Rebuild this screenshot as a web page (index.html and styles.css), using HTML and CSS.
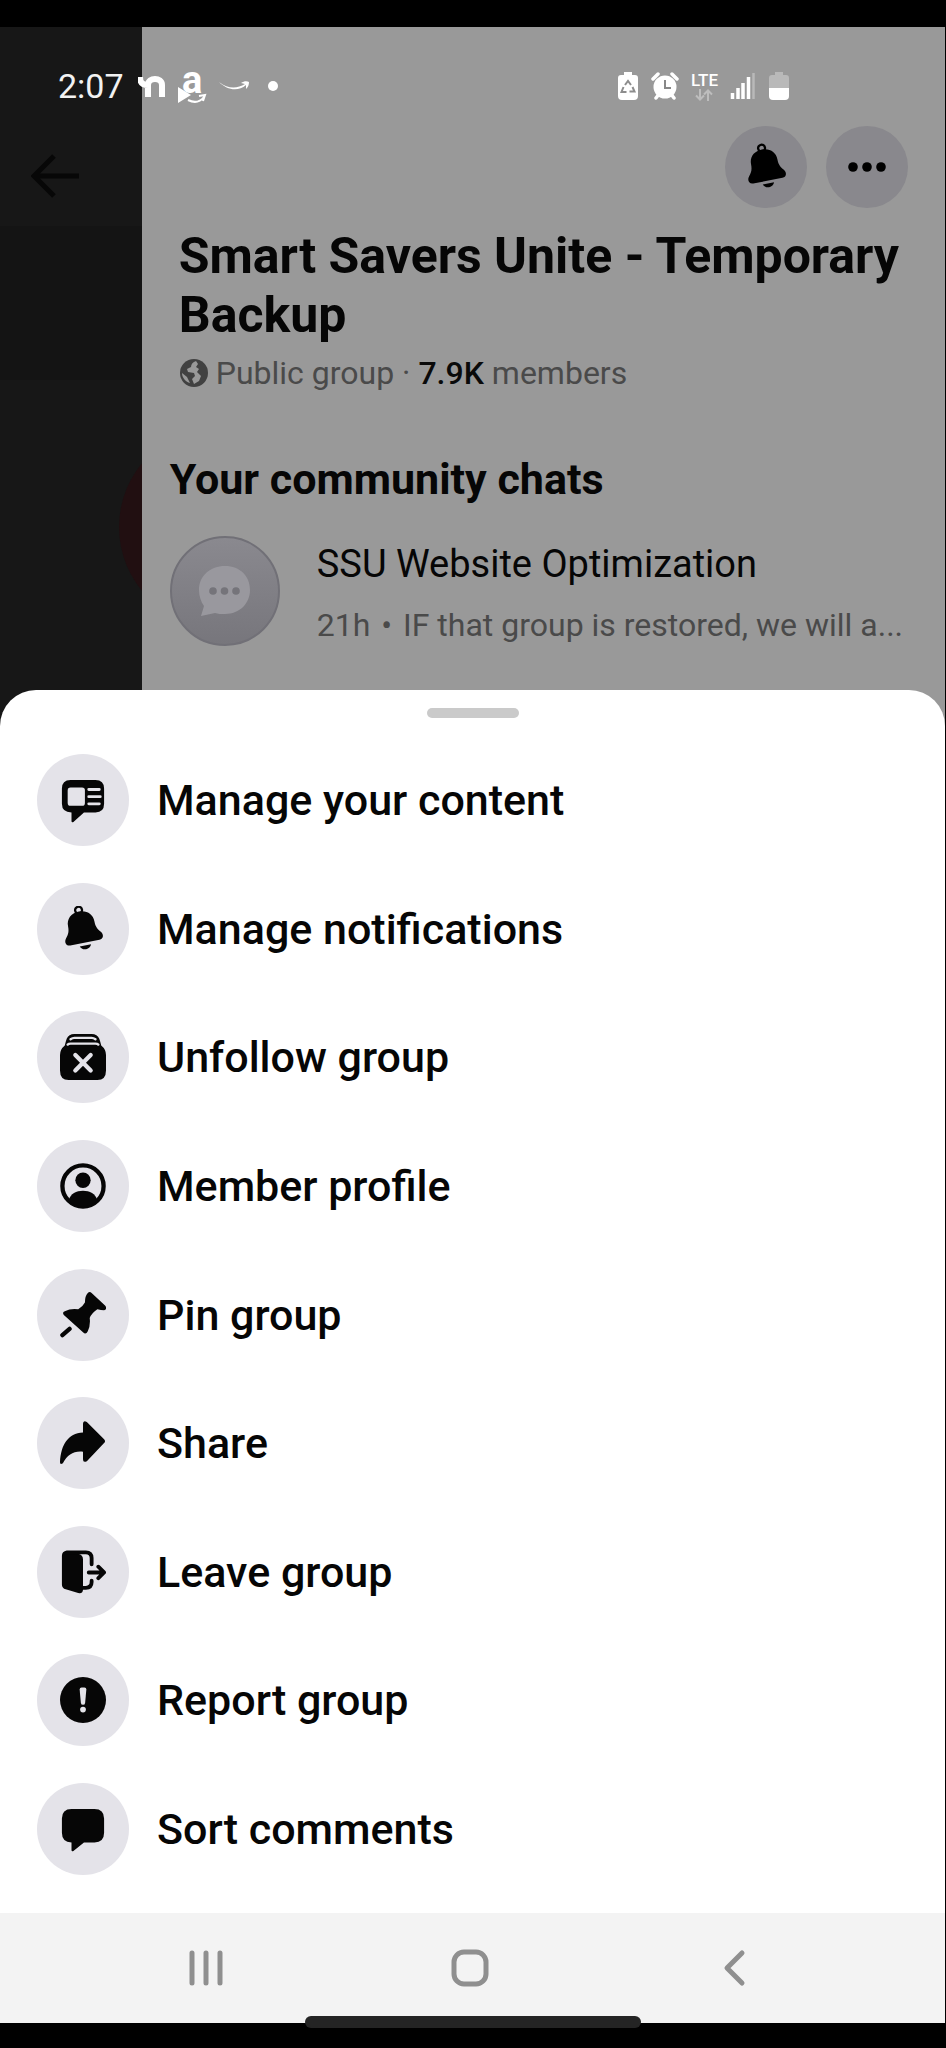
FILE: index.html
```
<!DOCTYPE html>
<html lang="en">
<head>
    <meta charset="UTF-8">
    <meta name="viewport" content="width=device-width, initial-scale=1.0">
    <title>Smart Savers Unite - Temporary Backup</title>
    <link rel="stylesheet" href="styles.css">
</head>
<body>
    <svg class="sprite" aria-hidden="true">
        <symbol id="bell" viewBox="0 0 48 48">
            <g transform="translate(-1 -1) rotate(-11 24 24)">
                <circle cx="24" cy="5" r="3.600" fill="none" stroke="currentColor" stroke-width="2.400"/>
                <path d="M24 6.500c8.500 0 14 5.500 14 13 0 6 1.500 8.500 4.500 12 2.700 3.300 1.500 8-3 8h-31c-4.500 0-5.700-4.700-3-8 3-3.500 4.500-6 4.500-12 0-7.500 5.500-13 14-13z"/>
                <path d="M18 42.500h12c-1 2.700-3.200 4-6 4s-5-1.300-6-4z"/>
            </g>
        </symbol>
    </svg>

    <div class="phone">
        <div class="status-bar">
            <div class="status-left">
                <span class="time">2:07</span>
                <svg class="logo-n" viewBox="0 0 28 24"><path d="M2 3c0 6 3 8 8 8M10 23V11c0-8 14-8 14 0v12" fill="none" stroke="#fff" stroke-width="6"/></svg>
                <svg class="logo-a" viewBox="0 0 30 34">
                    <text x="4" y="24" class="logo-letter">a</text>
                    <path d="M0 18v16l13-8z" fill="#fff"/>
                    <path d="M10 31c6 3 12 2 16-3M21 27l6-1-2 6" fill="none" stroke="#fff" stroke-width="2"/>
                </svg>
                <svg class="smile" viewBox="0 0 32 12"><path d="M1 2c9 7 18 7 26 2l-4-1c3-2 6-2 8-1 0 3-1 5-3 7v-4C20 12 9 10 1 2z" fill="#fff"/></svg>
                <span class="dot"></span>
            </div>
            <div class="status-right">
                <svg width="22" height="30" viewBox="0 0 22 30">
                    <path d="M7 1h8v3h3q3 0 3 3v18q0 4-4 4H5q-4 0-4-4V7q0-3 3-3h3z" fill="#fff"/>
                    <path d="M8 14l3-4 3 4M15.500 16l2 4.500h-5M9.500 21h-5l2-5" fill="none" stroke="#8d8d8d" stroke-width="2"/>
                </svg>
                <svg width="28" height="30" viewBox="0 0 28 30">
                    <circle cx="14" cy="16" r="11.500" fill="#fff"/>
                    <path d="M2 8l5-5M26 8l-5-5M5 27l3-4M23 27l-3-4" stroke="#fff" stroke-width="3.500" stroke-linecap="round"/>
                    <path d="M14 9v8h6" fill="none" stroke="#888" stroke-width="2"/>
                </svg>
                <div class="lte">
                    <span>LTE</span>
                    <svg width="18" height="12" viewBox="0 0 18 12"><path d="M5 0v10M1 6.500l4 4 4-4M13 12V2M9 5.500l4-4 4 4" fill="none" stroke="#bdbdbd" stroke-width="2"/></svg>
                </div>
                <svg width="26" height="28" viewBox="0 0 26 28">
                    <path d="M2.500 27v-6M8 27V16M13 27V11M18.500 27V5" stroke="#fff" stroke-width="3.500"/>
                    <path d="M23.500 27V1" stroke="#b9b9b9" stroke-width="2.500"/>
                </svg>
                <svg width="22" height="30" viewBox="0 0 22 30">
                    <path d="M7 1h8v3h3q3 0 3 3v11H1V7q0-3 3-3h3z" fill="#b9b9b9"/>
                    <path d="M1 17h20v8q0 4-4 4H5q-4 0-4-4z" fill="#fff"/>
                </svg>
            </div>
        </div>

        <div class="screen">
            <div class="side">
                <svg class="back" viewBox="0 0 50 44"><path d="M48 22H3M23 2L3 22l20 20" fill="none" stroke="#070707" stroke-width="5"/></svg>
                <div class="side-block"></div>
                <div class="side-circle"></div>
            </div>
            <div class="panel">
                <div class="panel-actions">
                    <button class="round-btn" aria-label="Notifications"><svg width="46" height="48"><use href="#bell"/></svg></button>
                    <button class="round-btn" aria-label="More">
                        <svg width="38" height="10" viewBox="0 0 38 10"><circle cx="5" cy="5" r="4.800"/><circle cx="19" cy="5" r="4.800"/><circle cx="33" cy="5" r="4.800"/></svg>
                    </button>
                </div>
                <h1>Smart Savers Unite - Temporary Backup</h1>
                <p class="meta">
                    <svg width="30" height="30" viewBox="0 0 30 30">
                        <circle cx="15" cy="15" r="14" fill="#414141"/>
                        <path d="M17 3c-3 1-5 3-5 6l-4 2 1 3 6 1 1 3-3 3 2 5 5-3 2-5-4-4 2-3-3-2 2-3zM3 15l5 4 3 6c-4-1-8-5-8-10z" fill="#999"/>
                    </svg>
                    <span>Public group · <strong>7.9K</strong> members</span>
                </p>
                <h2>Your community chats</h2>
                <div class="chat">
                    <div class="avatar">
                        <svg width="54" height="52" viewBox="0 0 54 52">
                            <path d="M27 1c15 0 25 10 25 24 0 13-10 24-25 24-4 0-7 0-10-1L3 51l3-10C3 37 1 31 1 25 1 11 12 1 27 1z" fill="#99989e"/>
                            <g fill="#75747a"><circle cx="15" cy="26" r="3.800"/><circle cx="26.500" cy="26" r="3.800"/><circle cx="38" cy="26" r="3.800"/></g>
                        </svg>
                    </div>
                    <div class="chat-text">
                        <p class="chat-name">SSU Website Optimization</p>
                        <p class="chat-last">21h <span class="sep">•</span> IF that group is restored, we will a...</p>
                    </div>
                </div>
            </div>
        </div>

        <div class="sheet">
            <div class="handle"></div>
            <div class="menu">
                <button class="item">
                    <span class="icon"><svg viewBox="0 0 48 48">
                        <path d="M11 3h26q9 0 9 9v16q0 9-9 9H25L14 47q-2 1-2-1v-9q-10 0-10-9V12q0-9 9-9z"/>
                        <rect x="8" y="11" width="18" height="19" rx="3" fill="#e4e3e9"/>
                        <path d="M30 13h11M30 20.500h12M30 28h11" stroke="#e4e3e9" stroke-width="3" stroke-linecap="round"/>
                    </svg></span>
                    Manage your content
                </button>
                <button class="item">
                    <span class="icon"><svg viewBox="0 0 48 48"><use href="#bell"/></svg></span>
                    Manage notifications
                </button>
                <button class="item">
                    <span class="icon"><svg viewBox="0 0 48 48">
                        <path d="M5 12l1-4 1-3q2-5 8-5h18q6 0 8 5l1 3 1 4q5 4 5 10v16q0 10-9 10H9q-9 0-9-10V22q0-6 5-10z"/>
                        <path d="M11 5.500q2-1.500 4-1.500h18q2 0 4 1.500M8 11q1-1 3-1h26q2 0 3 1" fill="none" stroke="#e4e3e9" stroke-width="2.500" stroke-linecap="round"/>
                        <path d="M16 22l16 16M32 22L16 38" stroke="#e4e3e9" stroke-width="4.500" stroke-linecap="round"/>
                    </svg></span>
                    Unfollow group
                </button>
                <button class="item">
                    <span class="icon"><svg viewBox="0 0 48 48">
                        <circle cx="24" cy="24" r="21.500" fill="none" stroke="currentColor" stroke-width="4.500"/>
                        <circle cx="24" cy="18" r="8"/>
                        <path d="M9 39c2-7 8-10 15-10s13 3 15 10c-8 8-22 8-30 0z"/>
                    </svg></span>
                    Member profile
                </button>
                <button class="item">
                    <span class="icon"><svg viewBox="0 0 48 48">
                        <path d="M29 1q2-2 4 0l14 13q3 4-1 5-3 0-7-1-6 4-8 9 1 8-2 14-2 4-5 1L4 24q-2-3 1-4 6-3 14-2 5-3 7-7 0-7 3-10z"/>
                        <path d="M2.500 45L10 38.500" stroke="currentColor" stroke-width="4.500" stroke-linecap="round"/>
                    </svg></span>
                    Pin group
                </button>
                <button class="item">
                    <span class="icon"><svg viewBox="0 0 48 48">
                        <path d="M24 4q0-4 4-2l18 18q2 2 0 4L28 43q-4 2-4-2v-8C14 32 8 36 3 45q-3 2-3-1C1 26 8 14 24 13z"/>
                    </svg></span>
                    Share
                </button>
                <button class="item">
                    <span class="icon"><svg viewBox="0 0 48 48">
                        <path d="M2 7q0-5 5-5l12 3q5 1 5 6v31q0 5-5 4L6 42q-4-1-4-5z"/>
                        <path d="M7 3.500h20q6 0 6 6V16M24 40.500h3q6 0 6-6V33" fill="none" stroke="currentColor" stroke-width="4" stroke-linecap="round"/>
                        <path d="M30 24.500h14M40 18.500l6 6-6 6" fill="none" stroke="currentColor" stroke-width="4" stroke-linecap="round" stroke-linejoin="round"/>
                    </svg></span>
                    Leave group
                </button>
                <button class="item">
                    <span class="icon"><svg viewBox="0 0 48 48">
                        <circle cx="24" cy="24" r="24"/>
                        <path d="M20.500 13q0-2 2-2h3q2 0 2 2l-1.300 14q-.2 2-2.200 2t-2.200-2z" fill="#e4e3e9"/>
                        <circle cx="24" cy="34" r="3" fill="#e4e3e9"/>
                    </svg></span>
                    Report group
                </button>
                <button class="item">
                    <span class="icon"><svg viewBox="0 0 48 48">
                        <path d="M12 3h24q10 0 10 10v15q0 10-10 10H25L14 47q-2 1-2-1v-8Q2 38 2 28V13Q2 3 12 3z"/>
                    </svg></span>
                    Sort comments
                </button>
            </div>
        </div>

        <div class="nav">
            <button aria-label="Recent apps"><svg width="36" height="38" viewBox="0 0 36 38"><path d="M4 4v30M18 4v30M32 4v30"/></svg></button>
            <button aria-label="Home"><svg width="38" height="38" viewBox="0 0 38 38"><rect x="3" y="3" width="32" height="32" rx="10"/></svg></button>
            <button aria-label="Back"><svg width="36" height="38" viewBox="0 0 36 38"><path d="M26 4L11 19l15 15"/></svg></button>
            <div class="home-bar"></div>
        </div>
    </div>
</body>
</html>
```
FILE: styles.css
```
* {
    box-sizing: border-box;
}
body {
    margin: 0;
    background: #000;
    color: #060606;
    font-family: Roboto, sans-serif;
}
h1, h2, p {
    margin: 0;
}
button {
    border: 0;
    padding: 0;
    background: none;
    color: inherit;
    font: inherit;
}
svg {
    display: block;
    fill: currentColor;
}
.sprite {
    position: absolute;
    width: 0;
    height: 0;
}
.phone {
    position: relative;
    display: flex;
    flex-direction: column;
    min-height: 100vh;
    padding: 27px 1px 25px 0;
}

/* status bar sits over the dimmed page */
.status-bar {
    position: absolute;
    z-index: 1;
    top: 66px;
    left: 58px;
    right: 156px;
    display: flex;
    justify-content: space-between;
    align-items: center;
    color: #fff;
}
.status-left, .status-right {
    display: flex;
    align-items: center;
}
.status-right {
    gap: 12px;
}
.time {
    font-size: 34px;
    line-height: 40px;
    color: #f2f2f2;
    margin-right: 14px;
}
.logo-n {
    width: 28px;
    height: 24px;
}
.logo-a {
    width: 30px;
    height: 34px;
    margin: 0 10px 0 12px;
    overflow: visible;
}
.logo-letter {
    font-size: 38px;
    font-weight: 700;
    fill: #fff;
}
.smile {
    width: 32px;
    height: 12px;
}
.dot {
    width: 10px;
    height: 10px;
    margin-left: 18px;
    border-radius: 50%;
    background: #fff;
}
.lte {
    display: flex;
    flex-direction: column;
    align-items: center;
    font-size: 17px;
    line-height: 17px;
    font-weight: 500;
}

.screen {
    display: flex;
}
.side {
    position: relative;
    flex: 0 0 15%;
    overflow: hidden;
    background: #171717;
}
.back {
    width: 50px;
    height: 44px;
    margin: 127px 0 0 31px;
}
.side-block {
    height: 154px;
    margin-top: 28px;
    background: #141414;
}
.side-circle {
    position: absolute;
    top: 400px;
    left: 119px;
    width: 200px;
    height: 200px;
    border-radius: 50%;
    background: #210f11;
}
.panel {
    flex: 1;
    min-width: 0;
    padding: 99px 37px 80px 28px;
    background: #999;
}
.panel-actions {
    display: flex;
    justify-content: flex-end;
    gap: 19px;
}
.round-btn {
    display: flex;
    align-items: center;
    justify-content: center;
    width: 82px;
    height: 82px;
    border-radius: 50%;
    background: #89888d;
    color: #000;
}
h1 {
    margin: 19px -8px 0 9px;
    font-size: 50px;
    line-height: 59px;
}
.meta {
    display: flex;
    align-items: center;
    gap: 7px;
    margin: 8px 0 0 9px;
    font-size: 32px;
    line-height: 40px;
    color: #4a4a4a;
}
.meta strong {
    font-weight: 500;
    color: #0a0a0a;
}
h2 {
    margin-top: 61px;
    font-size: 43px;
    line-height: 50px;
}
.chat {
    display: flex;
    gap: 37px;
    margin-top: 32px;
}
.avatar {
    display: flex;
    flex: none;
    align-items: center;
    justify-content: center;
    width: 110px;
    height: 110px;
    border: 2px solid #717077;
    border-radius: 50%;
    background: linear-gradient(#8a898f, #77767c);
}
.chat-text {
    white-space: nowrap;
}
.chat-name {
    margin-top: 4px;
    font-size: 38px;
    line-height: 48px;
}
.chat-last {
    margin-top: 17px;
    font-size: 32px;
    line-height: 40px;
    color: #4a4a4a;
}
.sep {
    margin: 0 3px;
}

.sheet {
    position: relative;
    flex: 1;
    display: flex;
    flex-direction: column;
    margin-top: -36px;
    padding: 18px 37px 20px;
    border-radius: 36px 36px 0 0;
    background: #fff;
}
.handle {
    align-self: center;
    width: 92px;
    height: 10px;
    margin-bottom: 18px;
    border-radius: 5px;
    background: #cacaca;
}
.menu {
    flex: 1;
    display: flex;
    flex-direction: column;
}
.item {
    flex: 1;
    display: flex;
    align-items: center;
    gap: 28px;
    font-size: 43px;
    line-height: 50px;
    font-weight: 500;
    text-align: left;
}
.icon {
    display: flex;
    align-items: center;
    justify-content: center;
    width: 92px;
    height: 92px;
    border-radius: 50%;
    background: #e4e3e9;
}
.icon svg {
    width: 46px;
    height: 46px;
}

.nav {
    position: relative;
    display: flex;
    justify-content: center;
    gap: 227px;
    height: 110px;
    padding-right: 6px;
    background: #f3f3f3;
}
.nav svg {
    fill: none;
    stroke: #8f8f8f;
    stroke-width: 5;
    stroke-linecap: round;
    stroke-linejoin: round;
}
.home-bar {
    position: absolute;
    bottom: -5px;
    left: 50%;
    width: 336px;
    height: 12px;
    margin-left: -168px;
    border-radius: 6px;
    background: #242424;
}
```
